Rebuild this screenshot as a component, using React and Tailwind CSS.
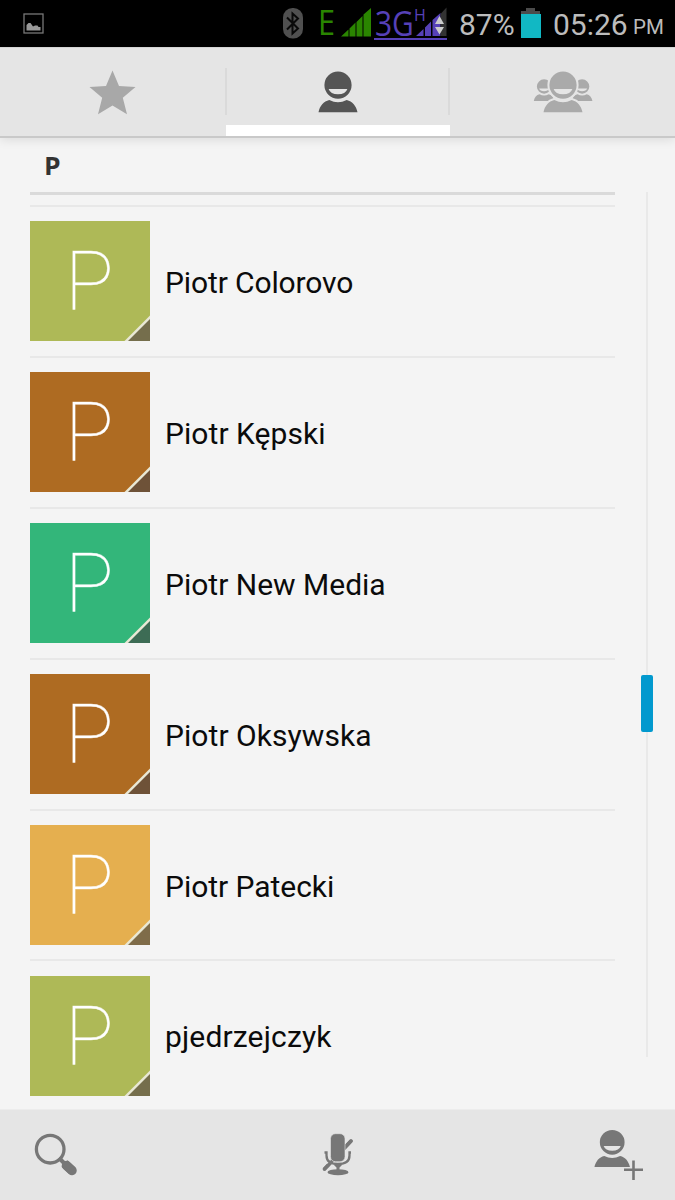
import React from 'react';

const contacts = [
  { name: 'Piotr Colorovo', color: 'bg-[#aeb957]', fold: '#756e4c', width: 'tracking-[-0.12px]' },
  { name: 'Piotr Kępski', color: 'bg-[#ae6b22]', fold: '#6e5238', width: 'tracking-[0.06px]' },
  { name: 'Piotr New Media', color: 'bg-[#33b67a]', fold: '#3d6c55', width: 'tracking-[0px]' },
  { name: 'Piotr Oksywska', color: 'bg-[#ae6b22]', fold: '#6e5238', width: 'tracking-[0.06px]' },
  { name: 'Piotr Patecki', color: 'bg-[#e5af4f]', fold: '#7f6c49', width: 'tracking-[-0.04px]' },
  { name: 'pjedrzejczyk', color: 'bg-[#aeb957]', fold: '#756e4c', width: 'tracking-[0.16px]' },
];

function PersonShape() {
  return (
    <>
      <path
        fillRule="evenodd"
        d="M20 .5a13.6 13.6 0 1 1 0 27.2 13.6 13.6 0 0 1 0-27.2ZM10.600 18a9.700 7 0 0 0 18.800 0Z"
      />
      <path d="M11.300 29q8.700 4.400 17.400 0c5.700 1.400 9.500 5.800 10.800 12.300H.5C1.800 34.800 5.600 30.400 11.300 29Z" />
    </>
  );
}

function StatusBar() {
  return (
    <header className="flex h-[47px] shrink-0 items-start bg-black text-[#bcbcbc]">
      <svg className="ml-[23px] mt-[13px] h-[21px] w-[21px]" viewBox="0 0 21 21">
        <rect x="1" y="1" width="19" height="19" fill="none" stroke="#777" strokeWidth="1.3" />
        <path d="M3.500 17.500v-5.500l2-2h2l2.500 3.500 2-1h2.500l1 1.500h2v3.500Z" fill="#999" />
      </svg>
      <svg className="ml-[238px] mt-[7px] h-[33px] w-[22px]" viewBox="0 0 22 33">
        <rect x="1" y="1" width="20" height="30.500" rx="9.500" fill="#505050" />
        <path d="M5 10.500l11 11-5.500 5v-20l5.500 5-11 11" fill="none" stroke="#090909" strokeWidth="2" />
      </svg>
      <span className="ml-[14px] mt-[3px] w-[23px] origin-left scale-x-[0.9] font-['Open_Sans'] text-[34px] leading-[38px] text-[#2a8500]">E</span>
      <svg className="mt-[7px] h-[30px] w-[31px]" viewBox="0 0 31 30">
        <path d="M0 29.500l7.500-7V29.500ZM8.500 29.500v-8l6-6v14ZM15.500 29.500V15l6-6v20.500ZM22.500 29.500V7.500L30 1v28.500Z" fill="#2a8500" />
      </svg>
      <div className="ml-[2px] mt-[6px] flex h-[34px] w-[73px] items-start border-b-2 border-[#5641b8] font-['Open_Sans'] text-[#5641b8]">
        <span className="-mt-px ml-px w-[39px] origin-left scale-x-[0.88] text-[34px] leading-[37px]">3G</span>
        <span className="w-[4px] text-[16px] leading-[18px]">H</span>
        <svg className="ml-[-2px] mt-px h-[30px] w-[31px] shrink-0" viewBox="0 0 31 30">
          <path d="M0 29l7.500-7v7ZM9 29v-8.500l6-6V29ZM16.500 29V13l8-7v23Z" fill="#5641b8" />
          <path d="M24.500 29V7l6-6.500V29Z" fill="#333" />
          <path d="M19 17l4.500-8 4.500 8ZM19 20h9l-4.500 7.500Z" fill="#ccc" />
        </svg>
      </div>
      <span className="ml-[12px] mt-[7px] w-[62px] whitespace-nowrap font-[Roboto] text-[30px] leading-[35px]">87%</span>
      <svg className="mt-[8px] h-[30px] w-[20px]" viewBox="0 0 20 30">
        <path d="M5 0h9v3h5v4H0V3h5Z" fill="#4b4b4b" />
        <path d="M0 6h20v24H0Z" fill="#11b8c4" />
      </svg>
      <span className="ml-[12px] mt-[7px] w-[80px] whitespace-nowrap font-[Roboto] text-[30px] leading-[35px]">05:26</span>
      <span className="mt-[15px] whitespace-nowrap font-[Roboto] text-[20.500px] leading-[24px]">PM</span>
    </header>
  );
}

function Tabs() {
  return (
    <nav className="relative z-10 flex h-[91px] shrink-0 border-b-2 border-t border-b-[#c9c9c9] border-t-[#d5d5d5] bg-[#e5e5e5] shadow-[0_2px_10px_rgba(0,0,0,0.10)]">
      <div className="flex w-[225px] justify-center pt-[22px]">
        <svg className="h-[46px] w-[47px]" viewBox="0 0 47 46" fill="#a8a8a8">
          <path d="m23.500 .5 6.500 15.500 16.500 1.100-12.700 10.600 4.200 16.500-14.500-8.800-14.500 8.800 4.200-16.500L.5 17.100 17 16Z" />
        </svg>
      </div>
      <div className="flex w-[225px] flex-col justify-between">
        <div className="mt-[20px] flex h-[47px] items-start justify-center border-x-2 border-[#dadada] pt-[3px]">
          <svg className="h-[42px] w-[40px]" viewBox="0 0 40 42" fill="#555555"><PersonShape /></svg>
        </div>
        <div className="ml-px h-[11px] bg-white" />
      </div>
      <div className="flex w-[225px] justify-center pt-[23px]">
        <svg className="h-[42px] w-[60px]" viewBox="0 0 60 42" fill="#aaaaaa">
          <g transform="translate(.5 8) scale(.53)"><PersonShape /></g>
          <g transform="translate(38.500 8) scale(.53)"><PersonShape /></g>
          <g transform="translate(10 0)">
            <g stroke="#e5e5e5" strokeWidth="4" fill="#e5e5e5">
              <circle cx="20" cy="14.100" r="13.600" />
              <path d="M11.300 29q8.700 4.400 17.400 0c5.700 1.400 9.500 5.800 10.800 12.300H.5C1.800 34.800 5.600 30.400 11.300 29Z" />
            </g>
            <PersonShape />
          </g>
        </svg>
      </div>
    </nav>
  );
}

function Contact({ name, color, fold, width }) {
  return (
    <li className="flex h-[150.900px] items-center border-b-2 border-[#e8e8e8] last:border-transparent">
      <div className={`relative flex h-[120px] w-[120px] shrink-0 overflow-hidden ${color}`}>
        <span className="ml-[35px] mt-[15px] font-[Roboto] text-[81px] font-thin leading-[94px] text-white [-webkit-text-stroke:0.6px_#ffffffb0]">P</span>
        <svg className="absolute bottom-0 right-0 h-[26px] w-[26px]" viewBox="0 0 26 26">
          <path d="M.5 26 26 .5V26Z" fill="#e9e8d5" />
          <path d="M4 26 26 4V26Z" fill={fold} />
        </svg>
      </div>
      <span className={`ml-[15px] mt-[3px] whitespace-nowrap font-[Roboto] text-[30px] leading-[36px] text-[#0b0b0b] ${width}`}>{name}</span>
    </li>
  );
}

function BottomBar() {
  return (
    <footer className="flex h-[91px] shrink-0 items-start justify-between border-t border-[#ececec] bg-[#e5e5e5] pl-[34px] pr-[31px] pt-[18px] text-[#777777]">
      <svg className="mt-[5px] h-[44px] w-[45px]" viewBox="0 0 45 44" fill="none" stroke="currentColor">
        <circle cx="16.200" cy="16.200" r="13.800" strokeWidth="3.300" />
        <path d="M25 25l7 7" strokeWidth="4" />
        <path d="m30.500 30.500 8 7.500" strokeWidth="9" />
        <path d="m32.500 32.500 5.500 5" strokeWidth="9.500" strokeLinecap="round" />
      </svg>
      <svg className="ml-[3px] mt-[5px] h-[44px] w-[34px]" viewBox="0 0 34 44" fill="none" stroke="currentColor">
        <path d="M3.500 36 30 8" strokeWidth="3.500" strokeLinecap="round" />
        <path d="M5 19.500v3q0 9 12 9t12-9v-3" stroke="#e5e5e5" strokeWidth="4.500" />
        <path d="m3.500 36 7-7M23 15.500 30 8" strokeWidth="3.500" strokeLinecap="round" />
        <rect x="9.500" y=".7" width="14.500" height="28" rx="5" fill="#777777" stroke="#e5e5e5" strokeWidth=".6" />
        <path d="M3.500 19.500h2v3q0 8.500 11.500 8.500t11.500-8.500v-3h1.500" strokeWidth="2.300" />
        <path d="M12.500 31.500h9l-3 3v3h-3v-3Z" fill="currentColor" stroke="none" />
        <ellipse cx="17" cy="39.200" rx="10.500" ry="3" fill="currentColor" stroke="none" />
      </svg>
      <svg className="h-[52px] w-[50px]" viewBox="0 0 50 52" fill="#777777">
        <g transform="translate(0 1.500) scale(.91)"><PersonShape /></g>
        <path d="M38.200 32.500h2.600v8h8.200v2.600h-8.200V52h-2.600v-8.900H30v-2.600h8.200Z" />
      </svg>
    </footer>
  );
}

export default function App() {
  return (
    <div className="flex h-[1200px] w-[675px] flex-col overflow-hidden bg-[#f4f4f4]">
      <StatusBar />
      <Tabs />
      <main className="flex h-[971px] shrink-0">
        <section className="ml-[30px] w-[585px]">
          <h2 className="h-[57px] border-b-[3px] border-[#dadada] pl-[14px] pt-[13px] font-['Open_Sans'] text-[24.500px] font-bold leading-[30px] text-[#333333]"><span className="inline-block origin-left scale-x-[1.08]">P</span></h2>
          <div className="mt-[10px] h-[2px] bg-[#e8e8e8]" />
          <ul>
            {contacts.map((contact) => (
              <Contact key={contact.name} {...contact} />
            ))}
          </ul>
        </section>
        <div className="ml-[25px] mt-[54px] flex h-[865px] w-[13px] justify-center">
          <div className="flex w-[2px] justify-center bg-[#e9e9e9]">
            <div className="mt-[483px] h-[57px] w-[12px] shrink-0 rounded-[2px] bg-[#0299ce]" />
          </div>
        </div>
      </main>
      <BottomBar />
    </div>
  );
}
